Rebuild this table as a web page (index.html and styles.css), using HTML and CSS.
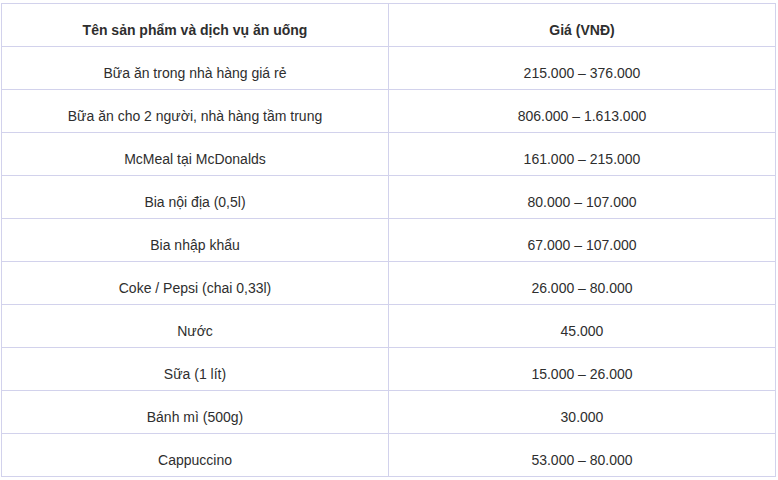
FILE: index.html
```html
<!DOCTYPE html>
<html lang="vi">
<head>
<meta charset="utf-8">
<title>Giá ăn uống</title>
<link rel="stylesheet" href="styles.css">
</head>
<body>
<p class="intro">Tham khảo giá ăn uống phổ biến, giá cả tham khảo</p>
<table class="price-table">
  <thead>
    <tr><th>Tên sản phẩm và dịch vụ ăn uống</th><th>Giá (VNĐ)</th></tr>
  </thead>
  <tbody>
    <tr><td>Bữa ăn trong nhà hàng giá rẻ</td><td>215.000 – 376.000</td></tr>
    <tr><td>Bữa ăn cho 2 người, nhà hàng tầm trung</td><td>806.000 – 1.613.000</td></tr>
    <tr><td>McMeal tại McDonalds</td><td>161.000 – 215.000</td></tr>
    <tr><td>Bia nội địa (0,5l)</td><td>80.000 – 107.000</td></tr>
    <tr><td>Bia nhập khẩu</td><td>67.000 – 107.000</td></tr>
    <tr><td>Coke / Pepsi (chai 0,33l)</td><td>26.000 – 80.000</td></tr>
    <tr><td>Nước</td><td>45.000</td></tr>
    <tr><td>Sữa (1 lít)</td><td>15.000 – 26.000</td></tr>
    <tr><td>Bánh mì (500g)</td><td>30.000</td></tr>
    <tr><td>Cappuccino</td><td>53.000 – 80.000</td></tr>
  </tbody>
</table>
</body>
</html>
```
FILE: styles.css
```css
html, body {
  margin: 0;
  padding: 0;
  background: #ffffff;
}
body {
  font-family: "Liberation Sans", Arial, sans-serif;
  font-size: 14px;
  color: #333333;
  overflow: hidden;
}
.intro {
  margin: -18px 0 0 62px;
  height: 21px;
  line-height: 20px;
  white-space: nowrap;
  overflow: hidden;
  color: #222;
}
.price-table {
  margin-left: 1px;
  width: 775px;
  border-collapse: collapse;
  table-layout: fixed;
  border: 1px solid #d2d2ec;
}
.price-table th,
.price-table td {
  width: 50%;
  border: 1px solid #d2d2ec;
  text-align: center;
  padding: 16px 8px 6px;
  line-height: 20px;
  height: 20px;
  box-sizing: content-box;
  color: #2e2e2e;
}
.price-table th {
  font-weight: bold;
}
```
